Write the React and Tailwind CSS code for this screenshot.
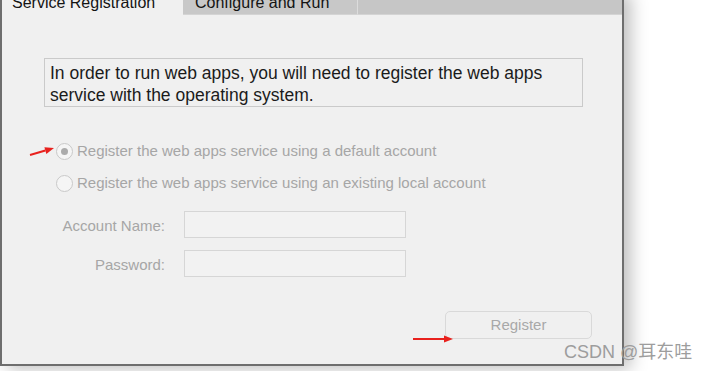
import React from 'react';

const Radio = ({ checked, label }) => (
  <div className="flex items-center h-[20px] ml-[54px]">
    <span className="w-[17px] h-[17px] rounded-full border border-[#c9c9c9] bg-[#f5f5f5] flex items-center justify-center">
      {checked && <span className="w-[7px] h-[7px] rounded-full bg-[#ababab]"></span>}
    </span>
    <span className="ml-[4px] text-[15px] text-[#a6a6a6]">{label}</span>
  </div>
);

const Field = ({ label }) => (
  <div className="flex items-center h-[27px]">
    <span className="w-[163px] pt-[3px] text-right text-[15px] text-[#a6a6a6]">{label}</span>
    <div className="ml-[19px] w-[222px] h-[27px] border border-[#d6d6d6] bg-[#f2f2f2]"></div>
  </div>
);

const Arrow = ({ className, x1, y1, x2, y2, w, h }) => {
  const ang = Math.atan2(y2 - y1, x2 - x1);
  const hl = 9, hw = 3.5;
  const bx = x2 - hl * Math.cos(ang), by = y2 - hl * Math.sin(ang);
  const px = -Math.sin(ang) * hw, py = Math.cos(ang) * hw;
  return (
    <svg className={className} width={w} height={h} viewBox={`0 0 ${w} ${h}`}>
      <line x1={x1} y1={y1} x2={bx} y2={by} stroke="#e8211d" strokeWidth="2" />
      <polygon points={`${x2},${y2} ${bx + px},${by + py} ${bx - px},${by - py}`} fill="#e8211d" />
    </svg>
  );
};

export default function App() {
  return (
    <div className="relative w-[711px] h-[371px] bg-white overflow-hidden font-['Liberation_Sans',Arial,sans-serif]">
      {/* Window */}
      <div className="-mt-[9px] w-[624px] h-[375px] bg-[#f0f0f0] border-x-2 border-b-2 border-[#6e6e6e] shadow-[7px_3px_16px_rgba(0,0,0,0.25)] flex flex-col">
        {/* Tabs */}
        <div className="flex h-[24px] bg-[#c6c6c6] shrink-0">
          <div className="w-[181px] bg-[#f0f0f0] pl-[10px] text-[16px] leading-[23px] text-[#141414]">Service Registration</div>
          <div className="w-[174px] h-[24px] pl-[12px] text-[16px] leading-[23px] text-[#141414] bg-[#c8c8c8] border-b border-[#d4d4d4]">Configure and Run</div>
          <div className="flex-1 border-l border-[#dcdcdc] border-b border-b-[#d4d4d4]"></div>
        </div>

        {/* Intro box */}
        <div className="ml-[42px] mt-[43px] w-[539px] h-[49px] border border-[#cacaca] pl-[5px] pt-[3px] text-[17.5px] leading-[22px] text-[#1b1b1b]">
          In order to run web apps, you will need to register the web apps<br />
          service with the operating system.
        </div>

        <div className="mt-[34px] flex flex-col gap-[12px]">
          <Radio checked label="Register the web apps service using a default account" />
          <Radio label="Register the web apps service using an existing local account" />
        </div>

        <div className="mt-[18px] flex flex-col gap-[12px]">
          <Field label="Account Name:" />
          <Field label="Password:" />
        </div>

        <div className="ml-[443px] mt-[34px] w-[147px] h-[28px] rounded-[5px] border border-[#d9d9d9] bg-[#f0f0f0] flex items-center justify-center pt-[1px] text-[15px] text-[#a8a8a8]">
          Register
        </div>
      </div>

      {/* Annotations */}
      <Arrow className="absolute left-[28px] top-[144px]" w={28} h={14} x1={2} y1={11} x2={26} y2={4} />
      <Arrow className="absolute left-[412px] top-[333px]" w={42} h={12} x1={1} y1={6} x2={41} y2={6} />

      <div className="absolute left-[564px] top-[340px] text-[18px] leading-[24px] text-[#9d9d9d] font-['Liberation_Sans','Noto_Sans_CJK_SC',sans-serif]">
        CSDN @耳东哇
      </div>
    </div>
  );
}
